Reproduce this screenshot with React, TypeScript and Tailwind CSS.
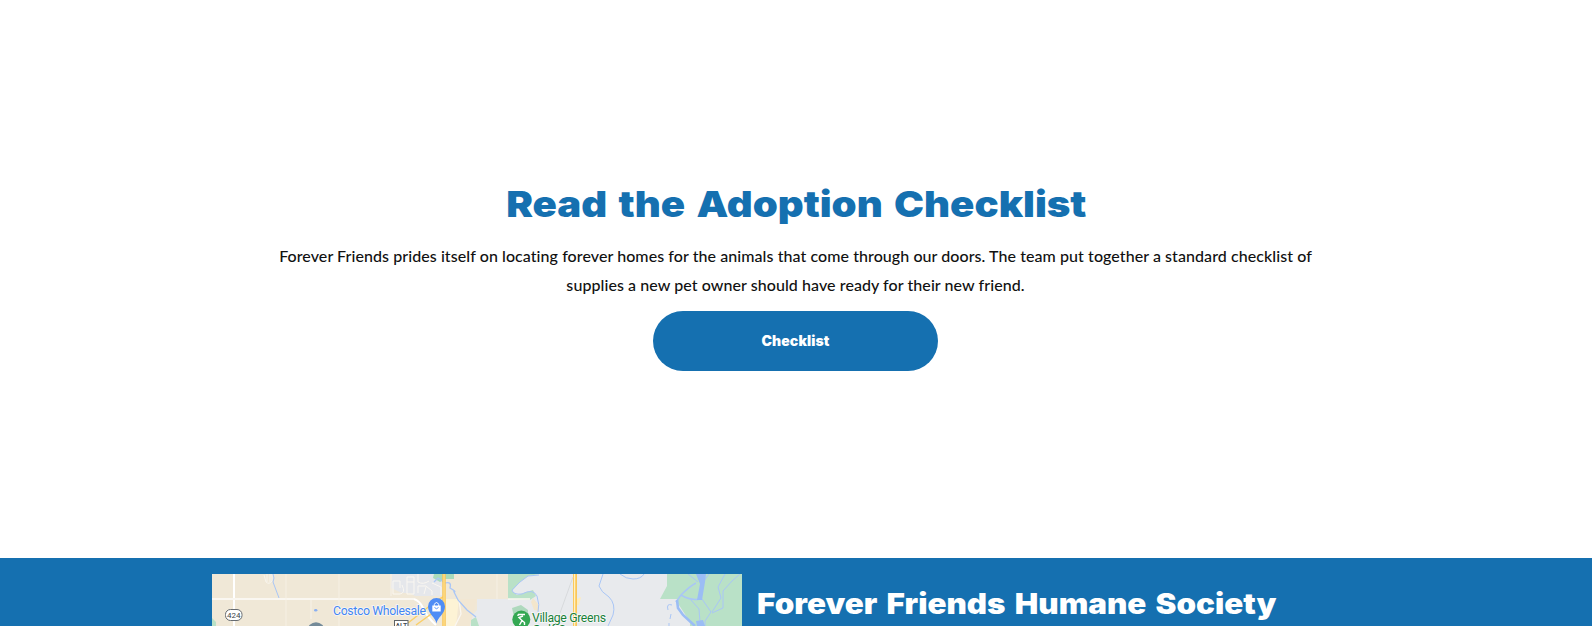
function AreaMap() {
  return (
    <svg className="block h-[400px] w-[530px] shrink-0" viewBox="0 0 530 400" role="img" aria-label="Map">
      <rect width="530" height="400" fill="#e8eaed" />
      <path d="M0 0H296V25H265V36L258 44V400H0Z" fill="#f0e8d7" />
      <path d="M180 0H232V22H203L198 19H190L179 14Z" fill="#e5e7eb" />
      <path d="M0 44L4 48V60H0Z" fill="#b9e1c7" />
      <path d="M222 0H242V5H233L228 8L221 4Z" fill="#a9dbbb" />
      <path d="M234 25H247L249 38L243 60H234Z" fill="#fdf3d5" />
      <path d="M247 25H265L258 52H244Z" fill="#f2e7d3" />
      <path d="M259 46L264 43L267 52H259Z" fill="#b9e1c7" />
      <path d="M296 0H327L316 2L308 8L300 17L305 21L321 16L324 22L318 26L296 25Z" fill="#b9e1c7" />
      <path d="M300 34L309 31L316 36V52H304Z" fill="#aed9bd" />
      <path d="M321 24L326 30L327 37L322 36L319 28Z" fill="#f3e6cc" />
      <path d="M365 25L369 23L367 31H364Z" fill="#fcecc0" />
      <path d="M455 0H530V400H482L478 48L465 28V25H448L455 12Z" fill="#b9e1c7" />

      <g fill="none" stroke="#faf7f1" strokeWidth="1.3">
        <path d="M22 0V60" strokeWidth="2" stroke="#fff" />
        <path d="M0 25H202" strokeWidth="1.8" />
        <path d="M74 0V52M127 0V60M285 0V25" strokeWidth="0.8" stroke="#f8f2e7" />
        <path d="M99 26V45M179 0V22" strokeWidth="0.7" />
        <path d="M52 1L54 8Q57 11 60 7V0M55 0V8M58 0V8" strokeWidth="0.8" />
        <path d="M202 25Q208 27 211 34Q215 43 224 51" strokeWidth="2" stroke="#fff" />
        <path d="M181 7H188V14M181 7V20H188Q194 19 190 11M195 3H202V20H195ZM195 8H202M206 0V8Q211 11 217 7M206 19V12H214L220 17V21M212 20L214 13M220 9L229 13V21" strokeWidth="1" />
        <path d="M247 26L249 40L243 52M296 25H318" />
      </g>

      <g fill="none" stroke="#a9c6f6" strokeWidth="1">
        <path d="M61 0Q63 4 61 8L67 24" />
        <path d="M222 8L226 4L233 9Q240 7 238 14Q245 18 242 18L246 26L255 36L264 43" strokeWidth="1.3" />
        <path d="M327 1L316 2L308 8L300 16Q301 21 310 20Q321 14 325 22Q328 31 326 38" />
        <path d="M391 0L387 12Q389 18 397 23Q404 30 401 41L396 52" />
        <path d="M408 0Q414 5 421 5Q429 5 432 0" />
        <path d="M460 31Q454 29 456 36M459 40L458 45M457 49V52" />
        <path d="M464 28L469 21Q478 12 484 9M469 21Q479 27 488 25L492 5" strokeWidth="1.6" />
        <path d="M479 26L487 35L488 48L493 52M490 25L499 38L493 47V52M513 0L506 13L509 24L500 38M528 0L520 7L511 17V34L500 39M476 0L486 8M497 0L492 7" />
      </g>
      <path d="M484 0H494L493 8L490 26H485L488 10Z" fill="#9bbdf5" />
      <path d="M465 26L466 34L471 41L483 52" fill="none" stroke="#9bbdf5" strokeWidth="2.6" />
      <path d="M484 47L491 46L493 52H485Z" fill="#9bbdf5" />

      <path d="M196 49L224 27L231 23M204 51L222 38" fill="none" stroke="#fbcf67" strokeWidth="1.5" />
      <path d="M232 0V60" stroke="#fbc44f" strokeWidth="3.4" />
      <path d="M232 0V60" stroke="#fde7a5" strokeWidth="1" />
      <path d="M363 0V60" stroke="#fac759" strokeWidth="4" />
      <path d="M362.6 0V60" stroke="#fff0c3" strokeWidth="1.3" />
      <path d="M361 3L348 39" stroke="#d3d5d8" strokeWidth="0.8" />

      <rect x="13.5" y="35.5" width="16.5" height="11" rx="5" fill="#fff" stroke="#666b70" />
      <text x="21.8" y="44" textAnchor="middle" className="font-['Roboto'] text-[8px]" fill="#40464c">424</text>
      <ellipse cx="103.7" cy="36.3" rx="1.7" ry="1.2" fill="#8ab0f2" />
      <circle cx="104" cy="57" r="8.7" fill="#748b99" />

      <text x="121" y="41" textLength="93" className="font-['Roboto'] text-[12.3px]" fill="#4285f4" stroke="#fff" strokeOpacity="0.7" strokeWidth="1.6" paintOrder="stroke">Costco Wholesale</text>
      <path d="M224.500 49.500C223.500 43 216 40 216 32.500A8.500 8.500 0 0 1 233 32.500C233 40 225.500 43 224.500 49.500Z" fill="#4f8df5" />
      <path d="M220.300 31.500H228.700V37.500H220.300Z" fill="#fff" />
      <path d="M222.300 32V30.500Q224.500 26.500 226.700 30.500V32" fill="none" stroke="#fff" strokeWidth="1" />
      <path d="M222.500 33.500Q224.500 36 226.500 33.500" fill="none" stroke="#4f8df5" strokeWidth="0.9" />

      <rect x="182.500" y="46.500" width="13.500" height="10" fill="#fff" stroke="#5e6266" />
      <text x="189.300" y="54" textAnchor="middle" className="font-['Roboto'] text-[7px] font-medium" fill="#40464c">ALT</text>

      <circle cx="309.300" cy="45.500" r="9" fill="#34a853" />
      <path d="M306 40.500H313M311 42L307 43.500L310 46.500L307.500 51M310 46.500L312.500 48.500V51M306 40.500V42" fill="none" stroke="#fff" strokeWidth="1.400" />
      <g className="font-['Roboto'] text-[12.300px]" fill="#188038" stroke="#fff" strokeOpacity="0.7" strokeWidth="1.6" paintOrder="stroke">
        <text x="320" y="48" textLength="74">Village Greens</text>
        <text x="320.500" y="59.500">Golf Course</text>
      </g>
    </svg>
  );
}

export default function App() {
  return (
    <div className="flex h-[626px] flex-col overflow-hidden bg-white">
      <main className="flex h-[558px] shrink-0 flex-col items-center pr-px pt-[180px]">
        <h1 className="origin-center scale-x-[1.115] whitespace-nowrap pl-[2px] font-['Inter',sans-serif] text-[36px] font-black leading-[48px] text-[#1570b0] [word-spacing:3px]">
          Read the Adoption Checklist
        </h1>
        <p className="mt-[14px] whitespace-nowrap text-center font-['Lato',sans-serif] text-[16px] font-medium leading-[28.800px] tracking-[0.07px] text-[#111]">
          Forever Friends prides itself on locating forever homes for the animals that come through our doors. The team put together a standard checklist of
          <br />
          supplies a new pet owner should have ready for their new friend.
        </p>
        <button className="mt-[11px] flex h-[60px] w-[285px] items-center justify-center rounded-full bg-[#1570b0] font-['Inter',sans-serif] text-[14px] font-black tracking-[0.1px] text-white">
          Checklist
        </button>
      </main>
      <footer className="flex h-[68px] shrink-0 overflow-hidden bg-[#1570b0] pl-[212px] pt-4">
        <AreaMap />
        <h2 className="ml-[14.500px] mt-[10px] h-10 origin-left scale-x-[1.12] whitespace-nowrap font-['Inter',sans-serif] text-[28px] font-black leading-[40px] text-white [word-spacing:2.700px]">
          Forever Friends Humane Society
        </h2>
      </footer>
    </div>
  );
}
